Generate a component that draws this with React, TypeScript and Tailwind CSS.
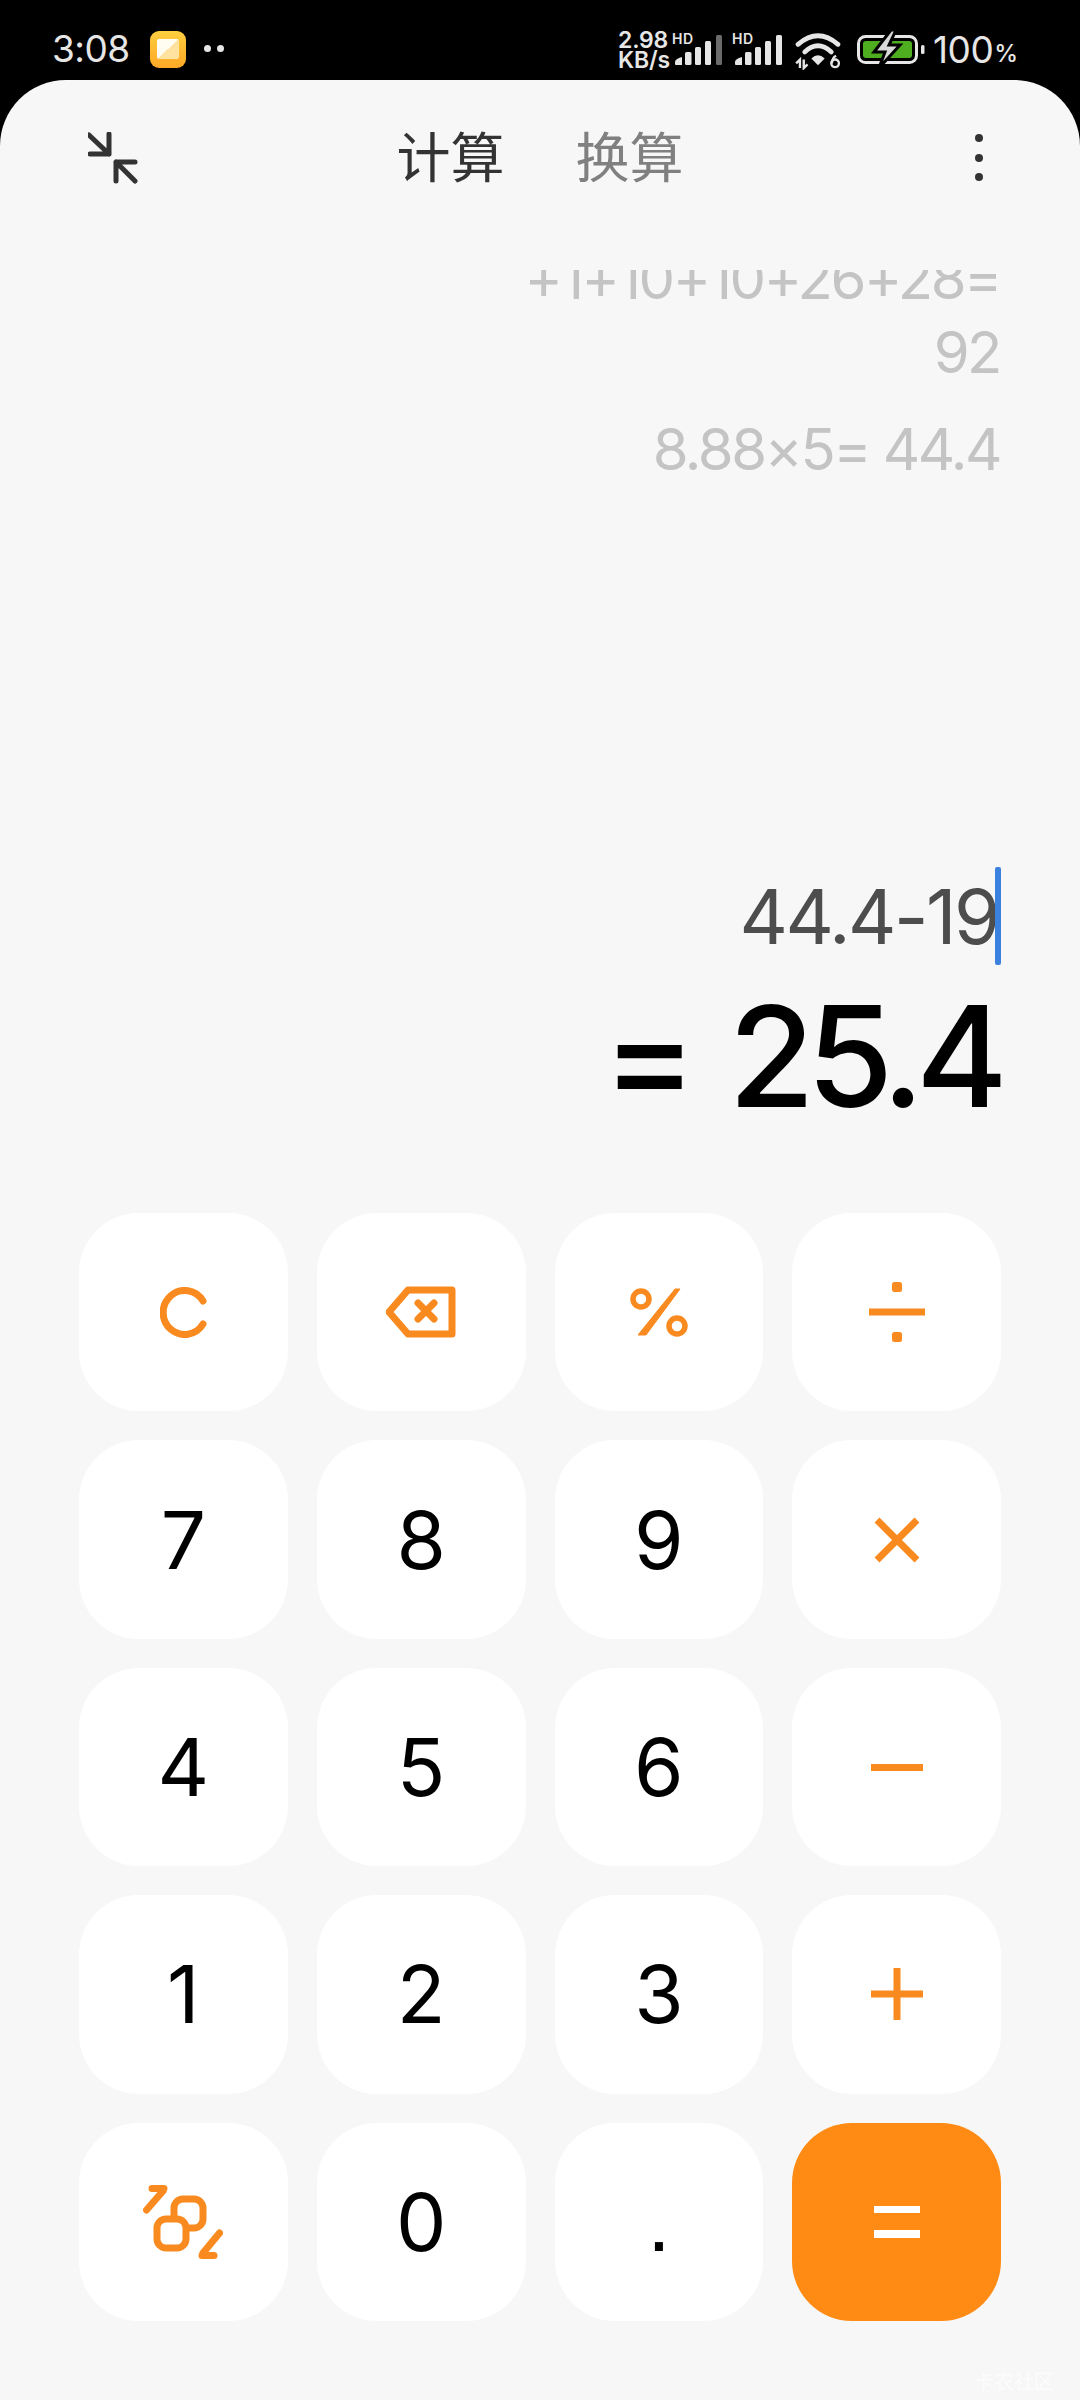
import React from "react";

const ORANGE = "#f98a1f";

function Signal({ last }: { last: string }) {
  return (
    <div className="relative w-[48px] h-[36px]">
      <span className="absolute left-[-3px] top-[2px] text-[14px] leading-[14px] font-semibold text-[#e6e6e6] tracking-[0.5px]">HD</span>
      <svg width="48" height="36" viewBox="0 0 48 36" className="absolute left-0 top-0">
        <path d="M0 32 Q0 29 7 27 V35 H1 Q0 35 0 34Z" fill="#e6e6e6" />
        <rect x="10" y="22" width="6.5" height="13" rx="1.5" fill="#e6e6e6" />
        <rect x="20" y="17" width="6" height="18" rx="1.5" fill="#e6e6e6" />
        <rect x="30" y="11" width="6" height="24" rx="1.5" fill="#e6e6e6" />
        <rect x="41" y="5" width="6" height="30" rx="1.5" fill={last} />
      </svg>
    </div>
  );
}

function Key({ children, accent }: { children: React.ReactNode; accent?: boolean }) {
  return (
    <div
      className={`h-[198.4px] rounded-[60px] flex items-center justify-center text-[80px] leading-none text-black ${accent ? "bg-[#ff8a14]" : "bg-white"}`}
    >
      {children}
    </div>
  );
}

const stroke = { stroke: ORANGE, fill: "none", strokeLinecap: "round" as const, strokeLinejoin: "round" as const };

export default function App() {
  return (
    <div className="relative w-[1080px] h-[2400px] bg-black flex flex-col overflow-hidden" style={{ fontFamily: "Inter, 'Noto Sans CJK SC', sans-serif" }}>
      {/* status bar */}
      <div className="h-[80px] shrink-0 flex items-start pl-[52px] text-[#e6e6e6]">
        <span className="text-[37px] leading-[37px] mt-[30px] w-[98px] font-normal tracking-[-0.5px]">3:08</span>
        <svg width="37" height="37" viewBox="0 0 37 37" className="mt-[31px]">
          <defs>
            <linearGradient id="ng" x1="0" y1="0" x2="0" y2="1">
              <stop offset="0" stopColor="#ffcf3f" />
              <stop offset="1" stopColor="#ffa726" />
            </linearGradient>
            <linearGradient id="nw" x1="0" y1="0" x2="1" y2="1">
              <stop offset="0.5" stopColor="#fffdf2" />
              <stop offset="0.5" stopColor="#ffe2a0" />
            </linearGradient>
          </defs>
          <rect width="36" height="37" rx="9" fill="url(#ng)" />
          <rect x="7" y="8" width="22" height="20" rx="2" fill="url(#nw)" />
        </svg>
        <div className="flex gap-[6px] mt-[45px] ml-[17px]">
          <div className="w-[7px] h-[7px] rounded-full bg-[#e6e6e6]" />
          <div className="w-[7px] h-[7px] rounded-full bg-[#e6e6e6]" />
        </div>
        <div className="ml-[394px] mt-[31px] w-[50px] text-[23px] leading-[19.5px] font-semibold text-left tracking-[-0.2px]">
          <div>2.98</div>
          <div>KB/s</div>
        </div>
        <div className="mt-[30px] ml-[7px]"><Signal last="#6b6b6b" /></div>
        <div className="mt-[30px] ml-[12px]"><Signal last="#e6e6e6" /></div>
        <svg width="46" height="38" viewBox="0 0 48 40" className="mt-[32px] ml-[12px]">
          <path d="M3 13 Q24 -5 45 13" fill="none" stroke="#e6e6e6" strokeWidth="5" strokeLinecap="round" />
          <path d="M10 21 Q24 8 38 21" fill="none" stroke="#e6e6e6" strokeWidth="5" strokeLinecap="round" />
          <path d="M17 28 Q24 21 31 28 L24 35Z" fill="#e6e6e6" />
          <path d="M1 33 L5 29 V38 M9 29 V38 L13 34" fill="none" stroke="#e6e6e6" strokeWidth="2.5" />
          <circle cx="42" cy="33" r="4" fill="none" stroke="#e6e6e6" strokeWidth="2.5" />
          <path d="M38.5 33 Q39 27 43 25" fill="none" stroke="#e6e6e6" strokeWidth="2.5" />
        </svg>
        <svg width="68" height="38" viewBox="0 0 68 38" className="mt-[30px] ml-[16px]">
          <rect x="1.5" y="6.5" width="58" height="26" rx="7" fill="none" stroke="#e6e6e6" strokeWidth="3" />
          <rect x="6" y="11" width="49" height="17" rx="3" fill="#4fae1f" />
          <path d="M34 0 L17 22 H28 L22 38 L43 15 H32 L39 0Z" fill="#d9d9d9" stroke="#000" strokeWidth="3" />
          <rect x="64" y="15" width="3.5" height="9" rx="1.5" fill="#e6e6e6" />
        </svg>
        <span className="text-[37px] leading-[37px] mt-[31px] ml-[8px] tracking-[-0.5px]">100</span>
        <span className="text-[24px] leading-[24px] mt-[42px] ml-[1px] font-medium">%</span>
      </div>

      {/* sheet */}
      <div className="relative flex-1 flex flex-col rounded-t-[66px] bg-[#f7f7f7]">
        {/* header */}
        <div className="h-[157px] shrink-0 relative flex items-center justify-center gap-[71px] text-[54px] leading-none">
          <span className="text-[#333333]">计算</span>
          <span className="text-[#808080]">换算</span>
          <svg width="50" height="52" viewBox="0 0 50 52" className="absolute left-[88px] top-[52px]" fill="none" stroke="#333" strokeWidth="5" strokeLinecap="round" strokeLinejoin="round">
            <path d="M1 3 L21 22 M21 2 V22 H2" />
            <path d="M47 49 L28 30 M47 30 H28 V49" />
          </svg>
          <div className="absolute left-[975px] top-[54px] flex flex-col gap-[11.5px]">
            <div className="w-[8px] h-[8px] rounded-full bg-[#333]" />
            <div className="w-[8px] h-[8px] rounded-full bg-[#333]" />
            <div className="w-[8px] h-[8px] rounded-full bg-[#333]" />
          </div>
        </div>

        {/* history */}
        <div className="mt-[33px] h-[216px] shrink-0 overflow-hidden flex flex-col justify-end items-end pr-[80px] text-[#c4c4c4] text-[58px] leading-[74px] font-normal tracking-[-2.5px]">
          <div className="text-right whitespace-nowrap">+1+10+10+26+28=</div>
          <div>92</div>
          <div className="mt-[23px]">8.88×5= 44.4</div>
        </div>

        {/* current input */}
        <div className="mt-[381px] flex justify-end items-center pr-[79px] h-[98px] shrink-0">
          <span className="text-[75px] leading-none text-[#4d4d4d] mr-[-3px] tracking-[-2.5px]">44.4-19</span>
          <div className="w-[6px] h-[98px] rounded-[2px] bg-[#3b82e0]" />
        </div>

        {/* result */}
        <div className="mt-[21px] flex justify-end items-center pr-[80px] text-[140px] leading-none text-black gap-[32px] font-medium">
          <span>=</span>
          <span className="tracking-[-8px]">25.4</span>
        </div>

        {/* keypad */}
        <div className="mt-auto mb-[79px] px-[79px] grid grid-cols-4 gap-[29px]">
          <Key>
            <svg width="47" height="51" viewBox="0 0 47 51" {...stroke} strokeWidth="7"><path d="M43 14 A21.5 22 0 1 0 43 37" /></svg>
          </Key>
          <Key>
            <svg width="70" height="52" viewBox="0 0 70 52" {...stroke} strokeWidth="7">
              <path d="M3 26 L22 4 H66 V48 H22 Z" />
              <path d="M32 17 L48 33 M48 17 L32 33" />
            </svg>
          </Key>
          <Key>
            <svg width="58" height="50" viewBox="0 0 58 50" fill="none">
              <circle cx="11" cy="12" r="8" stroke={ORANGE} strokeWidth="5.5" />
              <circle cx="47" cy="39" r="8" stroke={ORANGE} strokeWidth="5.5" />
              <path d="M45 2 H50 L16 48 H8Z" fill={ORANGE} stroke={ORANGE} strokeWidth="1" strokeLinejoin="round" />
            </svg>
          </Key>
          <Key>
            <svg width="56" height="60" viewBox="0 0 56 60">
              <rect x="0" y="26.5" width="56" height="7" fill={ORANGE} />
              <rect x="23" y="0" width="10" height="10" rx="2.5" fill={ORANGE} />
              <rect x="23" y="50" width="10" height="10" rx="2.5" fill={ORANGE} />
            </svg>
          </Key>

          <Key>7</Key>
          <Key>8</Key>
          <Key>9</Key>
          <Key>
            <svg width="46" height="46" viewBox="0 0 46 46" {...stroke} strokeLinecap="butt" strokeWidth="7"><path d="M3 3 L43 43 M43 3 L3 43" /></svg>
          </Key>

          <Key>4</Key>
          <Key>5</Key>
          <Key>6</Key>
          <Key>
            <svg width="52" height="7" viewBox="0 0 52 7"><rect width="52" height="7" fill={ORANGE} /></svg>
          </Key>

          <Key>1</Key>
          <Key>2</Key>
          <Key>3</Key>
          <Key>
            <svg width="52" height="52" viewBox="0 0 52 52"><path d="M0 22.5 H22.5 V0 H29.5 V22.5 H52 V29.5 H29.5 V52 H22.5 V29.5 H0Z" fill={ORANGE} /></svg>
          </Key>

          <Key>
            <svg width="80" height="74" viewBox="0 0 80 74" {...stroke} strokeWidth="7">
              <rect x="31" y="14" width="29" height="29" rx="9" />
              <rect x="14" y="34" width="29" height="29" rx="9" fill="#fff" />
              <path d="M3.5 25 L20 6 M9 3.5 H21" />
              <path d="M76.5 48 L60 68 M71 70.5 H59" />
            </svg>
          </Key>
          <Key>0</Key>
          <Key><span className="text-[84px]" style={{ fontFamily: "'Liberation Sans', sans-serif" }}>.</span></Key>
          <Key accent>
            <div className="flex flex-col gap-[17px]">
              <div className="w-[46px] h-[7.5px] bg-white" />
              <div className="w-[46px] h-[7.5px] bg-white" />
            </div>
          </Key>
        </div>

        <span className="absolute right-[26px] bottom-[8px] text-[20px] leading-none text-white/70">卡农社区</span>
      </div>
    </div>
  );
}
